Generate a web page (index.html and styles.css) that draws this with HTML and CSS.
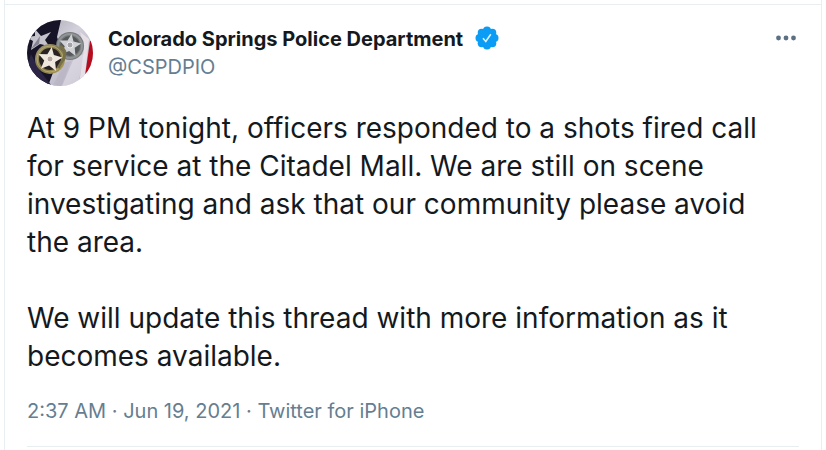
FILE: index.html
```html
<!DOCTYPE html>
<html lang="en">
<head>
<meta charset="utf-8">
<meta name="viewport" content="width=device-width, initial-scale=1">
<title>Colorado Springs Police Department</title>
<link rel="stylesheet" href="styles.css">
</head>
<body>
<main class="column">
  <article class="tweet">
    <header class="author">
      <svg class="avatar" viewBox="0 0 66 66" aria-hidden="true">
        <defs>
          <clipPath id="round"><circle cx="33" cy="33" r="33"/></clipPath>
          <linearGradient id="cloth" x1="0" y1="0" x2="1" y2="1">
            <stop offset="0" stop-color="#9b9aa5"/><stop offset=".45" stop-color="#d3d1dc"/><stop offset="1" stop-color="#aaa7b8"/>
          </linearGradient>
          <linearGradient id="gold" x1="0" y1="0" x2="1" y2="1">
            <stop offset="0" stop-color="#a49d7b"/><stop offset=".5" stop-color="#817648"/><stop offset="1" stop-color="#b1a15b"/>
          </linearGradient>
          <path id="star" d="M0-11 3-4 11-3 5 2 7 10 0 6-7 10-5 2-11-3-3-4Z"/>
        </defs>
        <g clip-path="url(#round)">
          <path fill="url(#cloth)" d="M0 0h66v66H0z"/>
          <path fill="#171427" d="M0 0h34L30 17 38 40 27 50 21 66H0z"/>
          <path fill="#2c2546" d="M4 34 13 51 25 66H11L0 48z"/>
          <path fill="#c4c3cc" d="m8 9 6 7 10-4-6 8 4 6-9-2-9 6 2-9-7-4 9-1z"/>
          <path fill="#858291" d="m13 16-1 8-8 5z"/>
          <path fill="#eeeaf2" d="M47 38 57 34 51 66H35z" opacity=".5"/>
          <path fill="#b9b4c5" d="m37 43 7-2-10 25h-8z" opacity=".7"/>
          <path fill="#e6dfe6" d="m53 12 9 7-5 45h-5l5-36z"/>
          <path fill="#b80c1c" d="M63 21h5v33l-10 2z"/>
          <circle cx="43" cy="26" r="14" fill="#77797b"/>
          <circle cx="43" cy="26" r="12" fill="none" stroke="#8f9495" stroke-width="2"/>
          <circle cx="43" cy="26" r="10" fill="#56595c"/>
          <use href="#star" transform="translate(43 25) rotate(8)" fill="#d0d1d5"/>
          <circle cx="43" cy="25" r="3" fill="#a5a3aa" stroke="#ededf0"/>
          <circle cx="23" cy="39" r="15" fill="url(#gold)"/>
          <circle cx="23" cy="39" r="13" fill="none" stroke="#b3a86c" stroke-width="1"/>
          <circle cx="23" cy="39" r="11" fill="#292321"/>
          <use href="#star" transform="translate(23 39) rotate(8) scale(1.1)" fill="#eee8df"/>
          <circle cx="23" cy="39" r="3" fill="#b7aba1" stroke="#f5f1e8"/>
          <path d="M33 26q7 4 4 12l-6 10" fill="none" stroke="#787046" stroke-width="3"/>
        </g>
      </svg>
      <div class="names">
        <div class="name-row">
          <a class="name" href="#">Colorado Springs Police Department</a>
          <svg class="verified" viewBox="0 0 24 24" role="img" aria-label="Verified account">
            <g fill="#0b9cf5"><circle cx="12" cy="12" r="9"/><circle cx="12" cy="4.5" r="4"/><circle cx="17.3" cy="6.7" r="4"/><circle cx="19.5" cy="12" r="4"/><circle cx="17.3" cy="17.3" r="4"/><circle cx="12" cy="19.5" r="4"/><circle cx="6.7" cy="17.3" r="4"/><circle cx="4.5" cy="12" r="4"/><circle cx="6.7" cy="6.7" r="4"/></g>
            <path d="m8 12.3 2.8 3.2 5-7.3" fill="none" stroke="#d9f2ff" stroke-width="1.6"/>
          </svg>
        </div>
        <a class="handle" href="#">@CSPDPIO</a>
      </div>
      <button class="more" type="button" aria-label="More">
        <svg class="dots" viewBox="0 0 20 6" aria-hidden="true"><circle cx="2.5" cy="3" r="2.4"/><circle cx="10" cy="3" r="2.4"/><circle cx="17.5" cy="3" r="2.4"/></svg>
      </button>
    </header>
    <div class="message">
      <p>At 9 PM tonight, officers responded to a shots fired call for service at the Citadel Mall. We are still on scene investigating and ask that our community please avoid the area.</p>
      <p>We will update this thread with more information as it becomes available.</p>
    </div>
    <footer class="meta"><a href="#">2:37 AM · Jun 19, 2021</a> · <a href="#">Twitter for iPhone</a></footer>
  </article>
</main>
</body>
</html>
```
FILE: styles.css
```css
* { box-sizing: border-box; }
body {
  margin: 0;
  background: #fff;
  color: #14191e;
  font-family: Inter, "Liberation Sans", sans-serif;
}
a { color: inherit; text-decoration: none; }
.column {
  min-height: 100vh;
  margin: 0 4px;
  padding-top: 4px;
  border: solid #e8eef2;
  border-width: 0 1px;
}
.tweet {
  padding: 15px 22px 0;
  border-top: 1px solid #e8eef2;
}
.author { display: flex; align-items: flex-start; }
.avatar { width: 66px; height: 66px; flex: none; }
.names { flex: 1; min-width: 0; margin-left: 15px; padding-top: 5px; }
.name-row { display: flex; align-items: center; gap: 12px; height: 28px; }
.name-row { gap: 12px; }
.name { font-size: 20px; line-height: 28px; font-weight: 700; }
.verified { width: 24px; height: 24px; flex: none; margin-bottom: 2px; }
.handle { display: block; font-size: 20px; line-height: 28px; color: #657e91; }
.more {
  display: flex;
  padding: 15px 3px;
  border: 0;
  background: none;
  color: #5b7083;
}
.dots { width: 20px; height: 6px; fill: currentColor; }
.message { margin-top: 23px; padding-right: 16px; font-size: 28px; line-height: 38px; }
.message p { margin: 0 0 38px; }
.message p:last-child { margin-bottom: 0; }
.meta {
  margin-top: 21px;
  padding-bottom: 20px;
  border-bottom: 1px solid #e8eef0;
  font-size: 20px;
  line-height: 30px;
  color: #657e91;
}
```
